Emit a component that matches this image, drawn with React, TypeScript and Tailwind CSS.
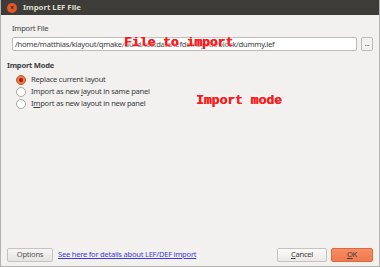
import { useState } from 'react';

const ui = { fontFamily: '"Noto Sans", "DejaVu Sans", sans-serif' };
const mono = { fontFamily: '"Liberation Mono", "Courier New", monospace', textShadow: '0.5px 0 0 #ff1a1a, 0 0 3px #fff, 0 0 5px #fff' };

function Radio({ checked, label, onClick }: { checked: boolean; label: React.ReactNode; onClick: () => void }) {
    return (
        <label onClick={onClick} className="flex items-center gap-[5px] h-[12px] cursor-default">
            {checked ? (
                <span className="w-[10px] h-[10px] rounded-full bg-[#f07746] border border-[#c9582c] flex items-center justify-center">
                    <span className="w-[4px] h-[4px] rounded-full bg-[#7a2a0e]" />
                </span>
            ) : (
                <span className="w-[10px] h-[10px] rounded-full bg-white border border-[#a8a7a5]" />
            )}
            <span className="text-[7.6px] tracking-[-0.25px] text-[#3c3c3c]">{label}</span>
        </label>
    );
}

export default function App() {
    const [mode, setMode] = useState(0);

    return (
        <div style={ui} className="w-[380px] h-[267px] flex flex-col bg-[#f2f1f0] border-x border-b border-[#b4b3b1] overflow-hidden">
            {/* title bar */}
            <div className="h-[15px] bg-[#3d3c38] flex items-center shrink-0 pl-[6px]">
                <span className="w-[10px] h-[10px] rounded-full bg-[#e4572a] flex items-center justify-center text-[#3d2418] text-[7px] font-bold leading-none">×</span>
                <span className="ml-[6px] text-[7.8px] font-bold text-[#dfdbd2]">Import LEF File</span>
            </div>

            <div className="flex-1 flex flex-col px-[6px] text-[7.6px] tracking-[-0.25px]">
                {/* Import File */}
                <div className="pl-[5px] pt-[8px] text-[#3f3f3f]">Import File</div>
                <div className="flex items-center gap-[4px] mt-[3px] pl-[5px] relative">
                    <div className="flex-1 h-[14px] bg-white border border-[#bdbbb8] rounded-[2px] flex items-center px-[2px] overflow-hidden">
                        <span className="text-[#3c3c3c] whitespace-nowrap">/home/matthias/klayout/qmake/build/testdata/lefdef/layout/block/dummy.lef</span>
                    </div>
                    <button className="w-[12px] h-[14px] border border-[#bdbbb8] rounded-[2px] bg-[#f4f3f2] text-[7px] text-[#555] leading-none flex items-end justify-center pb-[3px]">...</button>
                    <span style={mono} className="absolute left-[117px] top-[-1px] text-[13px] tracking-normal font-bold text-[#ff1a1a] leading-none whitespace-nowrap">File to import</span>
                </div>

                {/* Import Mode */}
                <div className="mt-[9px] font-bold text-[#3f3f3f]">Import Mode</div>
                <div className="flex flex-col gap-0 pl-[9px] mt-[2px] relative">
                    <Radio checked={mode === 0} onClick={() => setMode(0)} label="Replace current layout" />
                    <Radio checked={mode === 1} onClick={() => setMode(1)} label={<>Import as new <u>l</u>ayout in same panel</>} />
                    <Radio checked={mode === 2} onClick={() => setMode(2)} label={<>I<u>m</u>port as new layout in new panel</>} />
                    <span style={mono} className="absolute left-[189px] top-[20px] text-[13px] tracking-normal font-bold text-[#ff1a1a] leading-none whitespace-nowrap">Import mode</span>
                </div>

                <div className="flex-1" />

                {/* footer */}
                <div className="flex items-center pb-[4px]">
                    <button className="w-[46px] h-[14px] rounded-[2px] border border-[#c5c3c0] bg-gradient-to-b from-[#f7f6f5] to-[#e6e4e1] text-[#555] leading-none">Options</button>
                    <a href="#" className="ml-[5px] text-[#3a3adf] underline">See here for details about LEF/DEF import</a>
                    <div className="flex-1" />
                    <button className="w-[50px] h-[14px] rounded-[2px] border border-[#c5c3c0] bg-gradient-to-b from-[#fbfbfa] to-[#ebe9e7] text-[#3c3c3c] leading-none"><u>C</u>ancel</button>
                    <button className="ml-[4px] w-[42px] h-[14px] rounded-[2px] border border-[#e0673c] bg-gradient-to-b from-[#f78c64] to-[#ef7a50] text-[#3c3c3c] leading-none"><u>O</u>K</button>
                </div>
            </div>
        </div>
    );
}
